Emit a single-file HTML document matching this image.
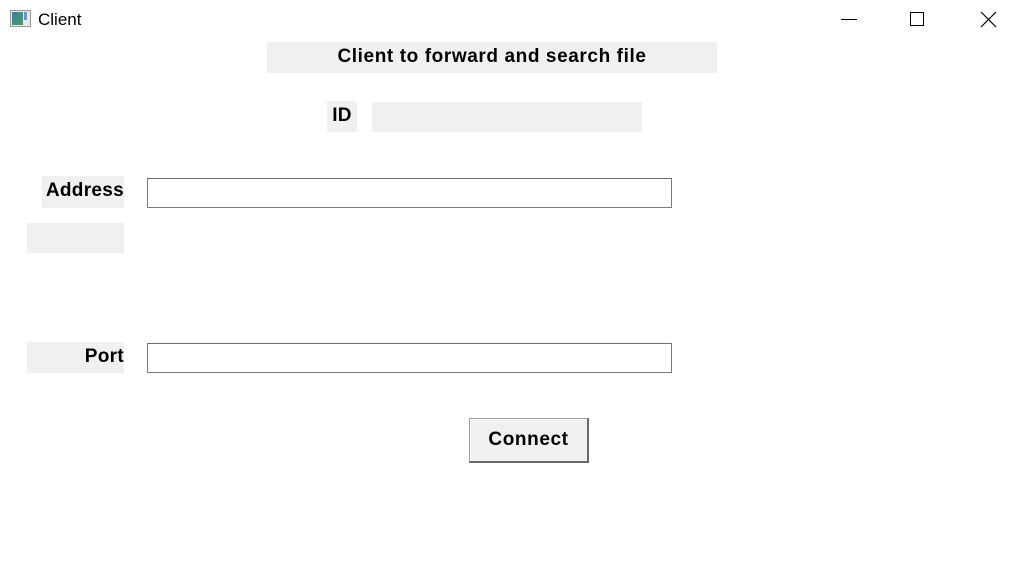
<!DOCTYPE html>
<html><head><style>
body{margin:0;width:1018px;height:579px;background:#fff;position:relative;overflow:hidden;font-family:"Liberation Sans",Arial,sans-serif}
.a{position:absolute;box-sizing:border-box}
.g{background:#f0f0f0}
.l{font-weight:bold;font-size:19px;color:#000;line-height:30px;letter-spacing:0.3px}
.in{background:#fff;border:1px solid #7a7a7a;border-top-color:#6d6d6d}
</style></head><body>
<div class="a" style="left:10px;top:10px;width:21px;height:17px;border:1px solid #9a9a9a;background:#e8e8e8"></div>
<div class="a" style="left:12px;top:12px;width:11px;height:13px;background:linear-gradient(135deg,#3a7ca8,#4aa060)"></div>
<div class="a" style="left:24px;top:12px;width:3px;height:8px;background:#5b9fd0"></div>
<div class="a" style="left:38px;top:9px;font-size:17px;line-height:22px;color:#000">Client</div>
<div class="a" style="left:841px;top:19px;width:16px;height:1px;background:#000"></div>
<div class="a" style="left:910px;top:12px;width:14px;height:14px;border:1px solid #000"></div>
<svg class="a" style="left:980px;top:11px" width="17" height="17"><path d="M1 1L16 16M16 1L1 16" stroke="#000" stroke-width="1.2"/></svg>

<div class="a g l" style="left:267px;top:42px;width:450px;height:31px;text-align:center;padding-left:0;letter-spacing:0.6px">Client to forward and search file</div>
<div class="a g l" style="left:327px;top:101px;width:30px;height:31px;text-align:center">ID</div>
<div class="a g" style="left:372px;top:102px;width:270px;height:30px"></div>
<div class="a g l" style="left:42px;top:176px;width:82px;height:32px;text-align:right;padding-right:0">Address</div>
<div class="a in" style="left:147px;top:178px;width:525px;height:30px"></div>
<div class="a g" style="left:27px;top:223px;width:97px;height:30px"></div>
<div class="a g l" style="left:27px;top:342px;width:97px;height:31px;text-align:right;padding-right:0">Port</div>
<div class="a in" style="left:147px;top:343px;width:525px;height:30px"></div>
<div class="a l" style="left:469px;top:418px;width:120px;height:45px;background:#f0f0f0;border:1px solid #a0a0a0;border-right:2px solid #696969;border-bottom:2px solid #696969;box-shadow:inset 1px 1px 0 #fff;text-align:center;line-height:42px;font-size:19px;letter-spacing:0.6px">Connect</div>
</body></html>
